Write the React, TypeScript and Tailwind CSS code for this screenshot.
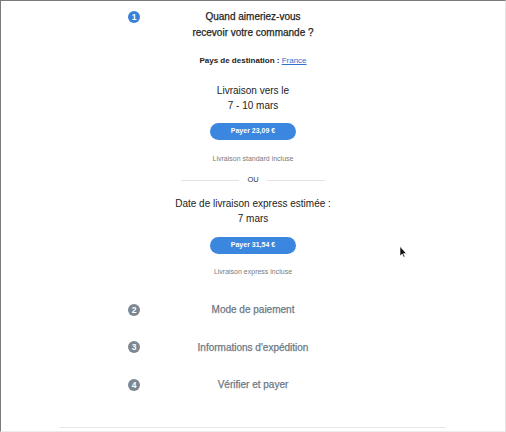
export default function App() {
  return (
    <div className="relative w-[506px] h-[432px] overflow-hidden bg-white border-t border-l border-t-[#7b7b7b] border-l-[#7b7b7b] border-r border-r-[#e4e4e4] border-b border-b-[#ececec] font-['Liberation_Sans',Arial,sans-serif] text-[#222]">
      {/* Étape 1 */}
      <div className="flex items-start pt-[8px]">
        <div className="ml-[127px] mt-[2px] w-[12px] h-[12px] rounded-full bg-[#3a82d8] text-white text-[8.5px] font-bold leading-[12px] text-center">
          1
        </div>
        <div className="flex-1 flex flex-col items-center text-center">
          <h2 className="text-[10px] leading-[16px] text-[#1f1f1f] [-webkit-text-stroke:0.25px_#1f1f1f]">
            Quand aimeriez-vous
            <br />
            recevoir votre commande ?
          </h2>
          <p className="mt-[14px] text-[8px] leading-[12px] font-bold text-[#222]">
            Pays de destination :{" "}
            <a className="font-normal text-[#2f72cf] underline">France</a>
          </p>

          <p className="mt-[16px] text-[10px] leading-[15px] text-[#222]">
            Livraison vers le
            <br />7 - 10 mars
          </p>
          <button className="mt-[10px] w-[86px] h-[17px] rounded-full bg-[#3b86de] text-white text-[7px] font-bold">
            Payer 23,09 €
          </button>
          <p className="mt-[14px] text-[7px] leading-[10px] text-[#7a7a7a]">
            Livraison standard incluse
          </p>

          <div className="mt-[10px] flex items-center gap-[8px]">
            <div className="w-[58px] border-t border-[#e2e2e2]" />
            <span className="text-[7.5px] leading-[12px] text-[#333]">OU</span>
            <div className="w-[58px] border-t border-[#e2e2e2]" />
          </div>

          <p className="mt-[10px] text-[10px] leading-[15px] text-[#222]">
            Date de livraison express estimée :
            <br />7 mars
          </p>
          <button className="mt-[11px] w-[86px] h-[17px] rounded-full bg-[#3b86de] text-white text-[7px] font-bold">
            Payer 31,54 €
          </button>
          <p className="mt-[13px] text-[7px] leading-[10px] text-[#7a7a7a]">
            Livraison express incluse
          </p>
        </div>
        <div className="w-[12px] mr-[127px]" />
      </div>

      {/* Étapes suivantes */}
      <div className="mt-[25px] flex flex-col gap-[22.5px]">
        {[
          ["2", "Mode de paiement"],
          ["3", "Informations d'expédition"],
          ["4", "Vérifier et payer"],
        ].map(([n, label]) => (
          <div key={n} className="flex items-center">
            <div className="ml-[127px] w-[12px] h-[12px] rounded-full bg-[#7c8792] text-white text-[8.5px] font-bold leading-[12px] text-center">
              {n}
            </div>
            <p className="flex-1 text-center text-[10px] leading-[15px] text-[#6c7884] [-webkit-text-stroke:0.25px_#6c7884]">
              {label}
            </p>
            <div className="w-[12px] mr-[127px]" />
          </div>
        ))}
      </div>

      <div className="mt-[35px] mx-[59px] border-t border-[#e6e6e6]" />

      {/* curseur */}
      <svg
        className="absolute left-[398px] top-[245px]"
        width="8"
        height="12"
        viewBox="0 0 8 12"
      >
        <path
          d="M1 0.5 L1 10 L3.2 8 L4.8 11.3 L6 10.8 L4.5 7.6 L7.3 7.4 Z"
          fill="#111"
          stroke="#fff"
          strokeWidth="0.6"
        />
      </svg>
    </div>
  );
}
